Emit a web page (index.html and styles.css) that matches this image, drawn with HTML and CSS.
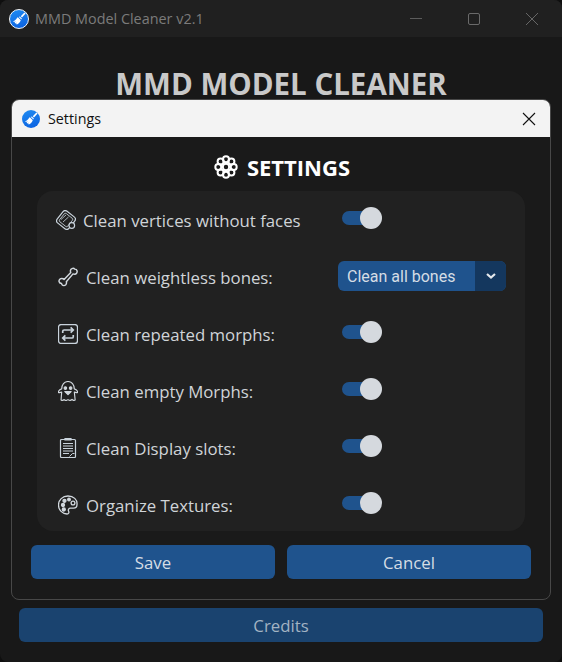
FILE: index.html
```html
<!DOCTYPE html>
<html lang="en">
<head>
  <meta charset="UTF-8">
  <title>MMD Model Cleaner v2.1</title>
  <link rel="stylesheet" href="styles.css">
</head>
<body>
  <svg class="defs" width="0" height="0">
    <symbol id="broom" viewBox="0 0 20 20">
      <path d="M15.800 2.800l1.400 1.400-4.300 4.600-1.400-1.400z" fill="#fff"/>
      <path d="M10.300 7.500l2.500 2.500-.7 1.100-2.900-2.900z" fill="#fff"/>
      <path d="M8.300 8.900l3.200 3.200c-.7 2.200-2.300 4-4.600 5.100l-1-.9 1.100-1.700-1.900 1.200-.9-.9 1.300-1.700-2 1-1-1c2.200-.6 4-2.100 4.800-4.300z" fill="#fff"/>
    </symbol>
  </svg>

  <div class="window">
    <header class="titlebar">
      <span class="app-icon ringed"><svg width="17" height="17"><use href="#broom"/></svg></span>
      <span class="titlebar-text">MMD Model Cleaner v2.1</span>
      <div class="window-controls">
        <svg width="14" height="14" viewBox="0 0 14 14"><path d="M1 6.500h12" stroke="#5c5c5c" fill="none"/></svg>
        <svg width="14" height="14" viewBox="0 0 14 14"><rect x="1.500" y="1.500" width="11" height="11" rx="1.500" stroke="#6a6a6a" fill="none"/></svg>
        <svg width="14" height="14" viewBox="0 0 14 14"><path d="M1 1l12 12M13 1L1 13" stroke="#666" fill="none"/></svg>
      </div>
    </header>
    <main class="main">
      <h1 class="main-title">MMD MODEL CLEANER</h1>
      <button class="credits-btn">Credits</button>
    </main>
  </div>

  <div class="dialog">
    <div class="dialog-bar">
      <span class="app-icon"><svg width="17" height="17"><use href="#broom"/></svg></span>
      <span class="dialog-bar-text">Settings</span>
      <svg class="dialog-close" width="14" height="14" viewBox="0 0 14 14"><path d="M1 1l12 12M13 1L1 13" stroke="#111" stroke-width="1.100" fill="none"/></svg>
    </div>
    <div class="dialog-body">
      <h2 class="settings-title">
        <svg width="24" height="24" viewBox="0 0 24 24" fill="none" stroke="#fff" stroke-width="2">
          <circle cx="12" cy="12" r="3.200"/>
          <circle cx="12" cy="4.300" r="3"/>
          <circle cx="12" cy="19.700" r="3"/>
          <circle cx="4.300" cy="12" r="3"/>
          <circle cx="19.700" cy="12" r="3"/>
          <circle cx="6.600" cy="6.600" r="3"/>
          <circle cx="17.400" cy="6.600" r="3"/>
          <circle cx="6.600" cy="17.400" r="3"/>
          <circle cx="17.400" cy="17.400" r="3"/>
        </svg>
        SETTINGS
      </h2>

      <div class="panel">
        <div class="row">
          <svg class="row-icon first" viewBox="1 1 20 20" fill="none" stroke="#c9d3dc" stroke-width="1.200">
            <rect x="3.500" y="3.500" width="15" height="15" rx="3" transform="rotate(38 11 11)"/>
            <rect x="5.800" y="5.800" width="10.400" height="10.400" rx="1.500" transform="rotate(38 11 11)" stroke-width=".8"/>
            <path d="M6 10.500l5-4.500M8 13l5.500-5" stroke-width=".8"/>
            <circle cx="16.800" cy="16.500" r="2.800" fill="#212121"/>
          </svg>
          <span class="row-label first">Clean vertices without faces</span>
          <label class="toggle"><span class="knob"></span></label>
        </div>
        <div class="row">
          <svg class="row-icon" viewBox="1.500 2 18 18" fill="none" stroke="#d2d8de" stroke-width="1.300" stroke-linejoin="round">
            <path d="M7 13.200l6-6.200c-.7-1.300-.3-3 1-3.600 1-.5 2-.3 2.500.5.900 0 2 .6 2.200 1.700.3 1.500-.8 2.800-2.200 2.900-.5 0-1 0-1.500-.3L9 15.200c.3.900.2 2-.5 2.800-1 1-2.500 1-3.300 0-.3-.4-.5-.8-.5-1.200-.9 0-1.900-.5-2.200-1.500-.4-1.400.6-2.800 2-2.900.9-.1 1.800 0 2.500.8z"/>
          </svg>
          <span class="row-label">Clean weightless bones:</span>
          <div class="dropdown">
            <span class="dropdown-value">Clean all bones</span>
            <span class="dropdown-arrow">
              <svg width="10" height="6" viewBox="0 0 10 6"><path d="M1 1l4 3.500L9 1" stroke="#e4e8ec" stroke-width="2.200" fill="none"/></svg>
            </span>
          </div>
        </div>
        <div class="row">
          <svg class="row-icon" viewBox="1.500 1.500 19 19" fill="none" stroke="#c9d3dc" stroke-width="1.200">
            <rect x="2" y="2" width="18" height="18" rx="2.500"/>
            <path d="M6 10V8.500c0-.8.500-1.300 1.300-1.300h8.500M13.500 4.800l2.500 2.400-2.500 2.400M16 12v1.500c0 .8-.5 1.300-1.300 1.300H6.200M8.500 12.400L6 14.800l2.500 2.400" stroke-width="1.600"/>
          </svg>
          <span class="row-label">Clean repeated morphs:</span>
          <label class="toggle"><span class="knob"></span></label>
        </div>
        <div class="row">
          <svg class="row-icon" viewBox="1.500 1.500 19 19" fill="none" stroke="#d2d8de" stroke-width="1.100" stroke-linejoin="round">
            <path d="M5 9c0-4 2.500-7 6-7s6 3 6 7c1.300.4 2.800 1.500 3.500 3.200-1 .4-2.200.4-3.500-.2l.8 7.500c-1.200.8-2.300.4-3-.5-1 1.100-2.200 1.300-3.800.2-1.300 1-2.600 1-3.600-.1-.8.8-1.800 1.100-3 .4L5 12c-1.300.6-2.500.6-3.500.2C2.200 10.500 3.700 9.400 5 9z"/>
            <circle cx="8.500" cy="8.200" r="1.200" fill="#d2d8de"/>
            <circle cx="13.500" cy="8.200" r="1.200" fill="#d2d8de"/>
            <path d="M8 11.500h6l-3 3z" fill="#d2d8de"/>
          </svg>
          <span class="row-label">Clean empty Morphs:</span>
          <label class="toggle"><span class="knob"></span></label>
        </div>
        <div class="row">
          <svg class="row-icon" viewBox="1 1 20 20" fill="none" stroke="#c9d3dc" stroke-width="1.200">
            <rect x="3.500" y="2.500" width="15" height="18" rx="1"/>
            <path d="M8 3h6V1.500H8z" fill="#c9d3dc"/>
            <path d="M6 6.500h10M6 9h10M6 11.500h10M6 14h10M6 16.500h6" stroke-width="1.100"/>
            <path d="M12.500 19.500l3-3h2" stroke-width="1"/>
          </svg>
          <span class="row-label">Clean Display slots:</span>
          <label class="toggle"><span class="knob"></span></label>
        </div>
        <div class="row">
          <svg class="row-icon" viewBox="1 1 20 20" fill="none" stroke="#d2d8de" stroke-width="1.300">
            <path d="M11 2C5.500 2 1.500 6 1.500 11s4 9 8.500 9c1.800 0 2.300-1.500 1.600-2.800-.8-1.500.2-3 1.900-3h3c2 0 3.500-1.500 3.500-3.700C20.500 5.500 16.500 2 11 2z"/>
            <circle cx="6" cy="11" r="1.500" fill="#d2d8de"/>
            <circle cx="7.500" cy="6.800" r="1.500" fill="#d2d8de"/>
            <circle cx="6.800" cy="15.500" r="1.500" fill="#d2d8de"/>
            <circle cx="12" cy="5.500" r="1.300" fill="#d2d8de"/>
            <circle cx="16" cy="9" r="1.900"/>
          </svg>
          <span class="row-label">Organize Textures:</span>
          <label class="toggle"><span class="knob"></span></label>
        </div>
      </div>

      <div class="actions">
        <button class="action-btn">Save</button>
        <button class="action-btn">Cancel</button>
      </div>
    </div>
  </div>
</body>
</html>
```

FILE: styles.css
```css
* {
  margin: 0;
  padding: 0;
  box-sizing: border-box;
}

body {
  width: 562px;
  height: 662px;
  overflow: hidden;
  background: #0f0f0f;
  font-family: "Open Sans", "Noto Sans", sans-serif;
  position: relative;
}

.defs {
  position: absolute;
}

/* Main window */
.window {
  height: 662px;
  background: #181818;
  border-radius: 8px;
  display: flex;
  flex-direction: column;
  overflow: hidden;
}

.titlebar {
  height: 37px;
  background: #202020;
  display: flex;
  align-items: center;
  padding-left: 9px;
}

.app-icon {
  width: 18px;
  height: 18px;
  border-radius: 50%;
  background: linear-gradient(160deg, #1f8cf2, #0a5fe0);
  display: flex;
  align-items: center;
  justify-content: center;
  flex-shrink: 0;
}

.app-icon.ringed {
  width: 20px;
  height: 20px;
  border: 1.500px solid #f2f6fa;
}

.titlebar-text {
  margin-left: 6px;
  font-size: 14.400px;
  color: #7b7b7b;
}

.window-controls {
  margin-left: auto;
  display: flex;
  gap: 44px;
  padding-right: 23px;
}

.main {
  flex: 1;
  display: flex;
  flex-direction: column;
  align-items: center;
  padding: 27px 19px 20px;
}

.main-title {
  font-size: 29.500px;
  line-height: 40px;
  font-weight: 700;
  color: #c9c9c9;
}

.credits-btn {
  margin-top: auto;
  width: 100%;
  height: 34px;
  border: 0;
  border-radius: 6px;
  background: #1a436f;
  color: #a3b3c3;
  font: 16.800px "Open Sans", sans-serif;
}

/* Settings dialog */
.dialog {
  position: absolute;
  left: 11px;
  top: 99px;
  width: 540px;
  height: 501px;
  background: #1a1a1a;
  border: 1px solid #484848;
  border-radius: 8px;
  overflow: hidden;
}

.dialog-bar {
  height: 37px;
  background: #f3f3f3;
  display: flex;
  align-items: center;
  padding: 0 14px 0 10px;
}

.dialog-bar-text {
  margin-left: 8px;
  font-size: 14.300px;
  color: #111;
}

.dialog-close {
  margin-left: auto;
}

.dialog-body {
  padding: 0 19px;
}

.settings-title {
  height: 54px;
  padding: 6px 0 0 2px;
  display: flex;
  align-items: center;
  justify-content: center;
  gap: 9px;
  font-size: 22px;
  font-weight: 700;
  color: #fff;
}

.panel {
  margin: 0 6px;
  height: 340px;
  padding-top: 3px;
  background: #212121;
  border-radius: 16px;
  display: flex;
  flex-direction: column;
  gap: 5px;
}

.row {
  height: 52px;
  display: flex;
  align-items: center;
  padding-left: 21px;
  position: relative;
}

.row-icon {
  width: 20px;
  height: 20px;
  flex-shrink: 0;
}

.row-icon.first {
  margin-left: -2px;
}

.row-label {
  margin-left: 8px;
  font-size: 16.800px;
  color: #d0d4d8;
}

.row-label.first {
  margin-left: 7px;
}

.toggle {
  position: absolute;
  left: 305px;
  top: 13px;
  width: 40px;
  height: 22px;
}

.toggle::before {
  content: "";
  position: absolute;
  left: 0;
  top: 4px;
  width: 34px;
  height: 14px;
  border-radius: 7px;
  background: #1f538d;
}

.knob {
  position: absolute;
  right: 0;
  top: 0;
  width: 22px;
  height: 22px;
  border-radius: 50%;
  background: #d5d9de;
}

.dropdown {
  position: absolute;
  left: 301px;
  top: 10px;
  width: 168px;
  height: 30px;
  border-radius: 6px;
  background: #1f538d;
  display: flex;
  overflow: hidden;
}

.dropdown-value {
  flex: 1;
  padding: 1px 0 0 9px;
  font: 16px/30px Roboto, sans-serif;
  color: #d5dde5;
}

.dropdown-arrow {
  width: 31px;
  background: #14375e;
  display: flex;
  align-items: center;
  justify-content: center;
}

.actions {
  display: flex;
  gap: 12px;
  margin-top: 14px;
}

.action-btn {
  flex: 1;
  height: 34px;
  border: 0;
  border-radius: 6px;
  background: #1f538d;
  color: #d5dde5;
  font: 16.800px "Open Sans", sans-serif;
}
```
